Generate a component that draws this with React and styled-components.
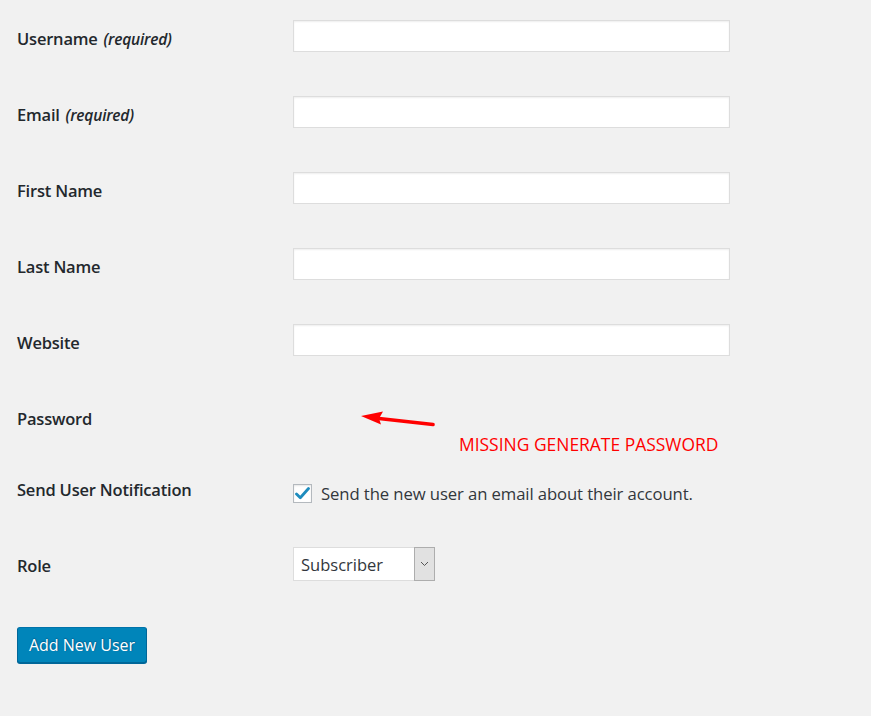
import React from "react";
import styled, { createGlobalStyle } from "styled-components";

const Global = createGlobalStyle`
  html, body {
    margin: 0;
    padding: 0;
    background: #f1f1f1;
  }
  body {
    font-family: "Open Sans", "Noto Sans", "Liberation Sans", sans-serif;
    color: #23282d;
    min-height: 716px;
  }
`;

const Form = styled.form`
  padding: 0 0 40px 17px;
  width: 854px;
  box-sizing: border-box;
`;

const Row = styled.div`
  display: grid;
  grid-template-columns: 276px 1fr;
  align-items: start;
  height: ${(p) => p.$h || 76}px;
  box-sizing: border-box;
  padding-top: 20px;
`;

const Label = styled.label`
  display: block;
  padding-top: 7px;
  font-size: 16.5px;
  line-height: 24px;
  font-weight: 600;
  color: #23282d;
  letter-spacing: -0.2px;
`;

const Req = styled.span`
  font-style: italic;
  font-size: 15.5px;
  font-weight: 600;
  margin-left: 2px;
`;

const Field = styled.div`
  position: relative;
  padding-top: ${(p) => p.$offset || 0}px;
`;

const TextInput = styled.input`
  display: block;
  width: 437px;
  height: 32px;
  box-sizing: border-box;
  margin: 0;
  border: 1px solid #ddd;
  background: #fff;
  box-shadow: inset 0 1px 2px rgba(0, 0, 0, 0.07);
  font: inherit;
  font-size: 16px;
  padding: 3px 8px;
  outline: none;
`;

const CheckLine = styled.label`
  display: flex;
  align-items: center;
  gap: 9px;
  font-size: 16.7px;
  line-height: 24px;
  color: #32373c;
  letter-spacing: -0.1px;
`;

const Box = styled.span`
  width: 19px;
  height: 19px;
  box-sizing: border-box;
  border: 1px solid #b4b9be;
  background: #fff;
  box-shadow: inset 0 1px 2px rgba(0, 0, 0, 0.1);
  display: flex;
  align-items: center;
  justify-content: center;
  flex: none;
  margin-top: -2px;
`;

const SelectBox = styled.div`
  display: flex;
  width: 142px;
  height: 34px;
  box-sizing: border-box;
  border: 1px solid #ddd;
  background: #fff;
`;

const SelectText = styled.span`
  flex: 1;
  padding-left: 7px;
  font-size: 16.5px;
  line-height: 33px;
  color: #32373c;
`;

const SelectArrow = styled.span`
  width: 21px;
  box-sizing: border-box;
  border: 1px solid #adadad;
  background: #e1e1e1;
  display: flex;
  align-items: center;
  justify-content: center;
  margin: -1px -1px -1px 0;
`;

const Submit = styled.div`
  padding-top: 22px;
`;

const Button = styled.button`
  width: 130px;
  height: 36px;
  box-sizing: border-box;
  background: #0085ba;
  border: 1px solid;
  border-color: #0073aa #006799 #006799;
  border-radius: 3px;
  box-shadow: 0 1px 0 #006799;
  color: #fff;
  font-family: inherit;
  font-size: 16px;
  padding: 0 0 1px;
  text-shadow: 0 -1px 1px #006799, 1px 0 1px #006799;
  cursor: pointer;
`;

const Note = styled.div`
  position: absolute;
  left: 0;
  top: 0;
  width: 437px;
  height: 80px;
`;

const NoteArrow = styled.svg`
  position: absolute;
  left: 68px;
  top: 11px;
`;

const NoteText = styled.span`
  position: absolute;
  left: 166px;
  top: 33px;
  font-size: 17.45px;
  line-height: 22px;
  color: #ff0000;
  white-space: nowrap;
  letter-spacing: 0;
  font-weight: 400;
`;

const fields = [
  { label: "Username", required: true },
  { label: "Email", required: true },
  { label: "First Name" },
  { label: "Last Name" },
  { label: "Website" },
];

export default function App() {
  return (
    <>
      <Global />
      <Form onSubmit={(e) => e.preventDefault()}>
        {fields.map((f) => (
          <Row key={f.label}>
            <Label>
              {f.label}
              {f.required && <Req> (required)</Req>}
            </Label>
            <Field>
              <TextInput type="text" />
            </Field>
          </Row>
        ))}

        <Row $h={71}>
          <Label>Password</Label>
          <Field>
            <Note>
              <NoteArrow width="76" height="20" viewBox="0 0 76 20">
                <path d="M72 13.5 L18 7.5" stroke="#ff0000" strokeWidth="3.6" strokeLinecap="round" />
                <path d="M0 5 L22 0.5 L18 7.5 L20 13.5 Z" fill="#ff0000" />
              </NoteArrow>
              <NoteText>MISSING GENERATE PASSWORD</NoteText>
            </Note>
          </Field>
        </Row>

        <Row>
          <Label>Send User Notification</Label>
          <Field $offset={11}>
            <CheckLine>
              <Box>
                <svg width="15" height="13" viewBox="0 0 15 13">
                  <path
                    d="M1.5 7 L5.3 10.8 L13.5 1.5"
                    fill="none"
                    stroke="#1e8cbe"
                    strokeWidth="2.8"
                    strokeLinecap="round"
                    strokeLinejoin="round"
                  />
                </svg>
              </Box>
              Send the new user an email about their account.
            </CheckLine>
          </Field>
        </Row>

        <Row $h={78}>
          <Label>Role</Label>
          <Field>
            <SelectBox>
              <SelectText>Subscriber</SelectText>
              <SelectArrow>
                <svg width="9" height="6" viewBox="0 0 9 6">
                  <path d="M1 1 L4.5 4.5 L8 1" fill="none" stroke="#555" strokeWidth="1" />
                </svg>
              </SelectArrow>
            </SelectBox>
          </Field>
        </Row>

        <Submit>
          <Button type="submit">Add New User</Button>
        </Submit>
      </Form>
    </>
  );
}
